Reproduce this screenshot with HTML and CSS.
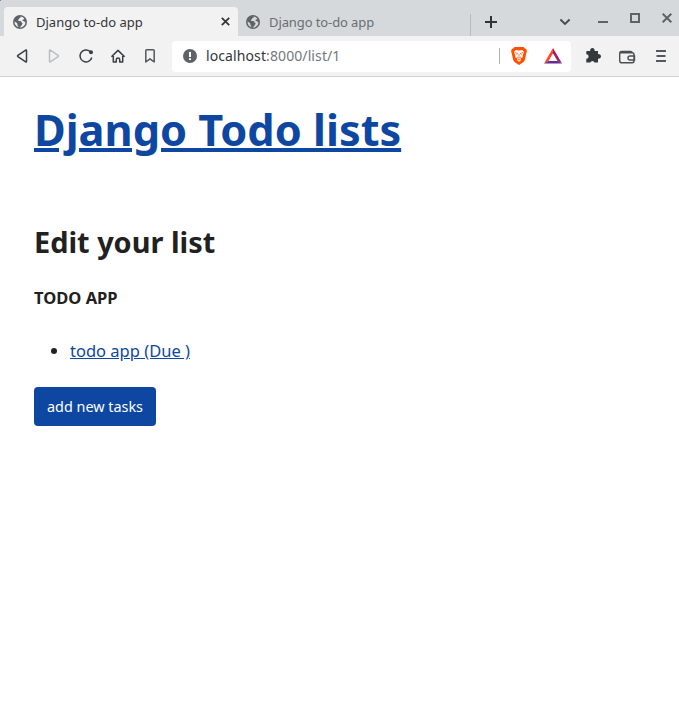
FILE: index.html
```html
<!DOCTYPE html>
<html lang="en">
<head>
<meta charset="utf-8">
<title>Django to-do app</title>
<link rel="stylesheet" href="styles.css">
</head>
<body>
<svg class="defs" width="0" height="0" aria-hidden="true">
  <symbol id="globe" viewBox="0 0 14 14">
    <circle cx="7" cy="7" r="7" fill="#5f6368"/>
    <path d="M7.4 1.5C8.4 2 7.2 3 6.2 3.2C6.4 4.3 5.2 4.2 5 5.1C4.8 6 6 6.1 7.1 6.1C8.3 6.1 8.6 7 8.7 7.8C9.8 8 9.9 8.8 9 9.5C8.6 10.7 7.4 11.8 6.3 12.5A5.6 5.6 0 0 0 12.5 7.6C11.7 6.5 11.1 6.7 10.1 6.1C9.1 5.7 9.3 4.5 10.6 4.4L11.3 3.5A5.6 5.6 0 0 0 7.4 1.5ZM1.5 6.6C1.4 9.3 3 11.6 5.5 12.2C5.2 10.9 4.4 10.5 4.4 9.4C4.4 8.3 3.2 7.5 1.5 6.6Z" fill="var(--land)"/>
  </symbol>
</svg>
<header class="browser">
  <div class="tabs">
    <div class="tab active">
      <svg class="globe" width="14" height="14"><use href="#globe"/></svg>
      <span class="tab-title">Django to-do app</span>
      <svg class="close" width="9" height="9" viewBox="0 0 9 9"><path d="M.8 .8L8.2 8.2M8.2 .8L.8 8.2" stroke="#333" stroke-width="1.7"/></svg>
    </div>
    <div class="tab">
      <svg class="globe" width="14" height="14"><use href="#globe"/></svg>
      <span class="tab-title">Django to-do app</span>
    </div>
    <svg class="controls" width="208" height="36" viewBox="471 0 208 36" fill="none">
      <path d="M485 22H497M491 16V28" stroke="#303438" stroke-width="2"/>
      <path d="M560.4 19.5L565 24L569.6 19.5" stroke="#45484d" stroke-width="1.8"/>
      <path d="M598 22H608" stroke="#5f6368" stroke-width="2"/>
      <rect x="631" y="14" width="8" height="8" stroke="#5f6368" stroke-width="2"/>
      <path d="M662.7 13.7L671.3 22.3M671.3 13.7L662.7 22.3" stroke="#5f6368" stroke-width="2"/>
    </svg>
  </div>
  <div class="toolbar">
    <svg class="nav" width="172" height="40" viewBox="0 36 172 40" fill="none" stroke="#3b3e42" stroke-width="1.5" stroke-linejoin="round">
      <path d="M26.5 50.4V61.6Q26.5 62.4 25.7 61.9L17.9 56.6Q17.2 56 17.9 55.4L25.7 50.1Q26.5 49.6 26.5 50.4Z"/>
      <path stroke="#bcbfc2" d="M49.5 50.4V61.6Q49.5 62.4 50.3 61.9L58.1 56.6Q58.8 56 58.1 55.4L50.3 50.1Q49.5 49.6 49.5 50.4Z"/>
      <path d="M90 51.4A6 6 0 1 0 91.8 57.5"/>
      <circle cx="91" cy="52.3" r="2" fill="#3b3e42" stroke="none"/>
      <path d="M111.4 56.8L118 50.4L124.6 56.8M113.3 56V62H116.3V59.5Q116.3 58 118 58T119.7 59.5V62H122.7V56"/>
      <path stroke="#54575b" d="M145.8 50.7Q145.8 49.8 146.8 49.8H153.2Q154.2 49.8 154.2 50.7V62L150 58.8L145.8 62Z"/>
    </svg>
    <div class="address">
      <svg class="info" width="14" height="14" viewBox="0 0 14 14"><circle cx="7" cy="7" r="7" fill="#5f6368"/><path d="M7 3V8M7 9.2V11" stroke="#fff" stroke-width="2"/></svg>
      <span class="url"><b>localhost</b>:8000/list/1</span>
      <svg class="shields" width="74" height="33" viewBox="497 40 74 33">
        <path d="M499.5 48V64" stroke="#b0b0b0"/>
        <path d="M514.5 47H523.5L524.8 48.5L526 48.7L527 51L526.5 52.5L524.8 60Q524.4 61.4 523.2 62.3L519 65L514.8 62.3Q513.6 61.4 513.2 60L511.5 52.5L511 51L512 48.7L513.2 48.5Z" fill="#ff5000"/>
        <path d="M515.7 50L519 50.4L522.3 50L524 52L522.8 55.2L522.6 57.2L520.2 58.7L521.2 60.3L519 61.8L516.8 60.3L517.8 58.7L515.4 57.2L515.2 55.2L514 52Z" fill="#fff"/>
        <path d="M514.8 52.6L517.6 53.4L516.8 54.8M523.2 52.6L520.4 53.4L521.2 54.8M519 54V56.8M517 56.8L519 58.2L521 56.8M517.5 60.4L519 59.4L520.5 60.4" fill="none" stroke="#ff6a25" stroke-width=".9"/>
        <path d="M553 48L544 63.5L548.5 61L553 53.2Z" fill="#ff4724"/>
        <path d="M553 48L562 63.5L557.5 61L553 53.2Z" fill="#9e1f63"/>
        <path d="M544 63.5H562L557.5 61H548.5Z" fill="#662d91"/>
      </svg>
    </div>
    <svg class="extras" width="108" height="40" viewBox="571 36 108 40" fill="none">
      <path d="M587 51H590.2A2.3 2.3 0 1 1 594.6 51H598V54.2A2.3 2.3 0 1 1 598 58.6V62.5H594.5A2.2 2.2 0 0 0 590.3 62.5H586.3V58.8A2.3 2.3 0 0 0 586.3 54.2V51.7Q586.3 51 587 51Z" fill="#35383c"/>
      <path d="M620.4 52.8H632Q634 52.8 634 54.8V61Q634 62.8 632 62.8H621.8Q619.7 62.8 619.7 60.7V53.3Q619.7 51.4 621.6 51.4H630.5Q632.2 51.4 632.2 53M634.5 56H630Q628 56 628 58T630 60H634.5Z" stroke="#4b4e52" stroke-width="1.4"/>
      <path d="M656 51H666M656.5 56H665.5M656 61H666" stroke="#55595e" stroke-width="1.8"/>
    </svg>
  </div>
</header>
<main>
  <h1><a href="#">Django Todo lists</a></h1>
  <h2>Edit your list</h2>
  <h3>TODO APP</h3>
  <ul><li><a href="#">todo app (Due )</a></li></ul>
  <button type="button">add new tasks</button>
</main>
</body>
</html>
```
FILE: styles.css
```css
* { box-sizing: border-box; }
body {
  margin: 0;
  min-height: 723px;
  background: #fff;
  color: #212121;
  font: 16.5px/24px "Noto Sans", sans-serif;
}
svg { display: block; flex: none; }
.defs { display: none; }
.browser { border-bottom: 1px solid #d3d3d3; background: #f2f2f2; }
.tabs {
  display: flex;
  align-items: flex-end;
  height: 36px;
  padding-left: 4px;
  background: radial-gradient(circle at 3px 3px, #d5d9dc 3px, #34383b 4px) 0 0 / 3px 3px no-repeat, #d5d9dc;
}
.tab {
  --land: #d5d9dc;
  display: flex;
  align-items: center;
  width: 233px;
  height: 29px;
  padding: 0 8px;
  color: #6b6e72;
  font-size: 13px;
  letter-spacing: -0.1px;
  background: linear-gradient(#b9bcbf, #b9bcbf) right 7px / 1px 22px no-repeat;
}
.tab.active {
  --land: #f2f2f2;
  width: 234px;
  padding: 0 8px 0 9px;
  border-radius: 4px 4px 0 0;
  background: #f2f2f2;
  color: #333639;
  letter-spacing: 0;
}
.tab-title { margin-left: 9px; white-space: nowrap; }
.close { margin-left: auto; }
.toolbar { display: flex; align-items: center; height: 40px; }
.address {
  display: flex;
  align-items: center;
  width: 399px;
  height: 31px;
  padding-left: 11px;
  border-radius: 4px;
  background: #fff;
  overflow: hidden;
}
.url { margin-left: 9px; color: #74777c; font-size: 14px; letter-spacing: 0.1px; }
.url b { color: #333639; font-weight: 400; }
.shields { margin-left: auto; }
main { padding: 24px 34px; }
a { color: #0d47a1; }
h1 { margin: 0; font-size: 43.3px; line-height: 58px; }
h1 a { text-decoration-thickness: 4px; }
h2 { margin: 64px 0 0; font-size: 28.9px; line-height: 38px; }
h3 { margin: 25px 0 0; font-size: 16.5px; line-height: 24px; }
ul { margin: 29px 0 24px; padding-left: 36px; }
button {
  display: block;
  width: 122px;
  height: 39px;
  padding: 0;
  border: 0;
  border-radius: 4px;
  background: #0d47a1;
  color: #fff;
  font: 14.4px/20px "Noto Sans", sans-serif;
}
```
